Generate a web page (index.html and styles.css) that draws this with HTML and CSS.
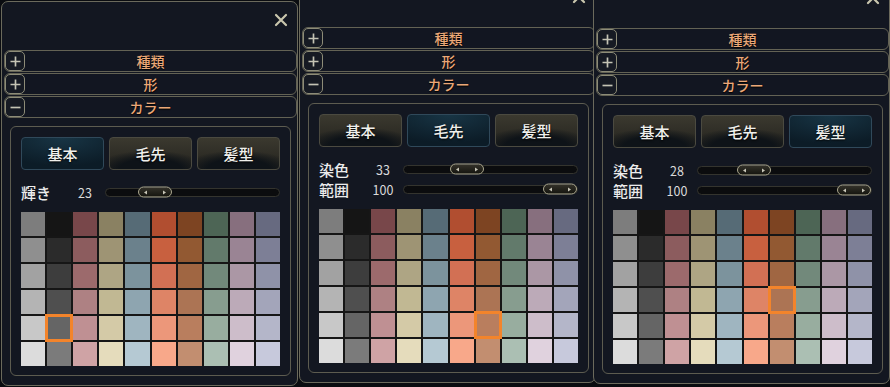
FILE: index.html
```html
<!DOCTYPE html>
<html lang="ja">
  <head>
    <meta charset="UTF-8" />
    <meta name="viewport" content="width=device-width, initial-scale=1.0" />
    <title>カラー</title>
    <link rel="stylesheet" href="styles.css">
  </head>
  <body>
    <div class="screen">
      <!-- 基本 -->
      <div class="panel">
        <div class="panel-top">
          <svg class="close-icon" viewBox="0 0 14 14"><path d="M2 2l10 10M12 2L2 12" /></svg>
        </div>
        <div class="section">
          <span class="toggle"><svg viewBox="0 0 18 18"><path d="M3 9h12M9 3v12" /></svg></span>
          <span class="section-title">種類</span>
        </div>
        <div class="section">
          <span class="toggle"><svg viewBox="0 0 18 18"><path d="M3 9h12M9 3v12" /></svg></span>
          <span class="section-title">形</span>
        </div>
        <div class="section">
          <span class="toggle"><svg viewBox="0 0 18 18"><path d="M3 9h12" /></svg></span>
          <span class="section-title">カラー</span>
        </div>
        <div class="color-box">
          <div class="tabs">
            <button class="tab active">基本</button>
            <button class="tab">毛先</button>
            <button class="tab">髪型</button>
          </div>
          <div class="slider-row">
            <span class="slider-label">輝き</span>
            <span class="slider-value">23</span>
            <div class="slider-track"><span class="slider-thumb" style="--v: 0.23"></span></div>
          </div>
          <div class="palette" data-row="4" data-col="1"></div>
        </div>
      </div>

      <!-- 毛先 -->
      <div class="panel panel-mid">
        <div class="panel-top">
          <svg class="close-icon" viewBox="0 0 14 14"><path d="M2 2l10 10M12 2L2 12" /></svg>
        </div>
        <div class="section">
          <span class="toggle"><svg viewBox="0 0 18 18"><path d="M3 9h12M9 3v12" /></svg></span>
          <span class="section-title">種類</span>
        </div>
        <div class="section">
          <span class="toggle"><svg viewBox="0 0 18 18"><path d="M3 9h12M9 3v12" /></svg></span>
          <span class="section-title">形</span>
        </div>
        <div class="section">
          <span class="toggle"><svg viewBox="0 0 18 18"><path d="M3 9h12" /></svg></span>
          <span class="section-title">カラー</span>
        </div>
        <div class="color-box">
          <div class="tabs">
            <button class="tab">基本</button>
            <button class="tab active">毛先</button>
            <button class="tab">髪型</button>
          </div>
          <div class="slider-row">
            <span class="slider-label">染色</span>
            <span class="slider-value">33</span>
            <div class="slider-track"><span class="slider-thumb" style="--v: 0.33"></span></div>
          </div>
          <div class="slider-row">
            <span class="slider-label">範囲</span>
            <span class="slider-value">100</span>
            <div class="slider-track"><span class="slider-thumb" style="--v: 1"></span></div>
          </div>
          <div class="palette" data-row="4" data-col="6"></div>
        </div>
      </div>

      <!-- 髪型 -->
      <div class="panel panel-last">
        <div class="panel-top">
          <svg class="close-icon" viewBox="0 0 14 14"><path d="M2 2l10 10M12 2L2 12" /></svg>
        </div>
        <div class="section">
          <span class="toggle"><svg viewBox="0 0 18 18"><path d="M3 9h12M9 3v12" /></svg></span>
          <span class="section-title">種類</span>
        </div>
        <div class="section">
          <span class="toggle"><svg viewBox="0 0 18 18"><path d="M3 9h12M9 3v12" /></svg></span>
          <span class="section-title">形</span>
        </div>
        <div class="section">
          <span class="toggle"><svg viewBox="0 0 18 18"><path d="M3 9h12" /></svg></span>
          <span class="section-title">カラー</span>
        </div>
        <div class="color-box">
          <div class="tabs">
            <button class="tab">基本</button>
            <button class="tab">毛先</button>
            <button class="tab active">髪型</button>
          </div>
          <div class="slider-row">
            <span class="slider-label">染色</span>
            <span class="slider-value">28</span>
            <div class="slider-track"><span class="slider-thumb" style="--v: 0.28"></span></div>
          </div>
          <div class="slider-row">
            <span class="slider-label">範囲</span>
            <span class="slider-value">100</span>
            <div class="slider-track"><span class="slider-thumb" style="--v: 1"></span></div>
          </div>
          <div class="palette" data-row="3" data-col="6"></div>
        </div>
      </div>
    </div>

    <script>
      // Cores da paleta, uma coluna por tom (de escuro para claro)
      const columns = [
        ["#7d7d7d", "#8f8f8f", "#a2a2a2", "#b4b4b4", "#c8c8c8", "#dcdcdc"],
        ["#151515", "#2b2b2b", "#3d3d3d", "#4f4f4f", "#656565", "#7b7b7b"],
        ["#78474a", "#8c5c5e", "#9c6a6c", "#ae8183", "#bf9093", "#cfa3a5"],
        ["#8a8162", "#9e9474", "#aea584", "#c1b893", "#d4caa7", "#e5dcbc"],
        ["#566b76", "#6b818c", "#7c939d", "#8ea5b0", "#9fb5c0", "#b5c9d3"],
        ["#b14e30", "#c8603f", "#d27054", "#de8466", "#ec977a", "#f8a88a"],
        ["#7d4422", "#925932", "#a06642", "#ac7454", "#b97e5e", "#c28e70"],
        ["#4d6555", "#627a6b", "#72897b", "#879d8f", "#98ad9f", "#abbfb3"],
        ["#876f7e", "#9a8494", "#ab97a5", "#bcaab8", "#cdbdca", "#e0d2de"],
        ["#676a80", "#7d7f96", "#8f92a8", "#a3a5ba", "#b4b6c9", "#c7c9dc"]
      ];

      document.querySelectorAll(".palette").forEach(palette => {
        const selRow = Number(palette.dataset.row);
        const selCol = Number(palette.dataset.col);
        for (let row = 0; row < 6; row++) {
          for (let col = 0; col < 10; col++) {
            const cell = document.createElement("span");
            cell.className = "swatch";
            cell.style.background = columns[col][row];
            if (row === selRow && col === selCol) cell.classList.add("selected");
            palette.appendChild(cell);
          }
        }
      });
    </script>
  </body>
</html>
```

FILE: styles.css
```css
* {
  box-sizing: border-box;
}

body {
  margin: 0;
  background-color: #0a0c10;
  font-family: "Noto Sans CJK JP", "Noto Sans", sans-serif;
  overflow: hidden;
}

.screen {
  display: flex;
  align-items: flex-start;
  width: 890px;
  height: 387px;
  overflow: hidden;
}

.panel {
  flex: none;
  width: 297px;
  margin-top: 1px;
  margin-left: 1px;
  padding: 0 0 9px 2px;
  background-color: #131721;
  border: 1px solid #6b6a5c;
  border-radius: 7px;
}

.panel-mid {
  margin-top: -22px;
}

.panel-last {
  margin-top: -21px;
  margin-left: -3px;
}

.panel-top {
  height: 48px;
  display: flex;
  justify-content: flex-end;
  align-items: flex-start;
  padding: 11px 9px 0 0;
}

.close-icon {
  width: 14px;
  height: 14px;
  fill: none;
  stroke: #c9c6ad;
  stroke-width: 2.2;
  stroke-linecap: round;
}

.section {
  display: grid;
  grid-template-columns: 20px 1fr 20px;
  align-items: center;
  height: 22px;
  margin-bottom: 1px;
  border: 1px solid #636254;
  border-radius: 6px;
  background-color: #121621;
}

.toggle {
  width: 20px;
  height: 20px;
  display: flex;
  align-items: center;
  justify-content: center;
  border: 1px solid #8d8c78;
  border-radius: 5px;
  background-color: #161a23;
}

.toggle svg {
  width: 15px;
  height: 15px;
  fill: none;
  stroke: #c4c3b4;
  stroke-width: 2;
}

.section-title {
  text-align: center;
  font-size: 14px;
  font-weight: 500;
  line-height: 20px;
  color: #eba878;
  text-shadow: 0 1px 1px #000;
}

.color-box {
  margin: 8px 6px 0;
  padding: 10px 10px 9px;
  border: 1px solid #5d5c50;
  border-radius: 6px;
}

.tabs {
  display: grid;
  grid-template-columns: repeat(3, 1fr);
  gap: 5px;
  margin-bottom: 12px;
}

.tab {
  height: 33px;
  padding: 0;
  border: 1px solid #4b4a40;
  border-radius: 4px;
  font-family: inherit;
  font-size: 15px;
  font-weight: 500;
  color: #f0f0ec;
  text-shadow: 0 1px 2px #000;
  background:
    radial-gradient(ellipse 70% 60% at 50% 100%, #0e1318 55%, rgba(14, 19, 24, 0) 100%),
    linear-gradient(#3b392f, #24231e);
}

.tab.active {
  border-color: #30495a;
  background: radial-gradient(ellipse 90% 90% at 50% 0%, #183545 0%, #0c1c27 100%);
}

.slider-row {
  display: flex;
  align-items: center;
  height: 20px;
}

.slider-label {
  width: 49px;
  font-size: 15px;
  font-weight: 500;
  color: #ececec;
}

.slider-value {
  width: 30px;
  text-align: center;
  font-size: 12.5px;
  color: #dadada;
}

.slider-track {
  flex: 1;
  position: relative;
  height: 9px;
  margin-left: 5px;
  border: 1px solid #34342e;
  border-radius: 5px;
  background-color: #0b0c0e;
}

.slider-thumb {
  position: absolute;
  top: 50%;
  left: calc((100% - 34px) * var(--v));
  width: 34px;
  height: 11px;
  transform: translateY(-50%);
  display: flex;
  align-items: center;
  justify-content: space-between;
  padding: 0 5px;
  border: 1px solid #aca88f;
  border-radius: 6px;
  background: linear-gradient(#34322a, #15150f);
}

.slider-thumb::before,
.slider-thumb::after {
  content: "";
  border-top: 2.5px solid transparent;
  border-bottom: 2.5px solid transparent;
}

.slider-thumb::before {
  border-right: 3px solid #c8c6b8;
}

.slider-thumb::after {
  border-left: 3px solid #c8c6b8;
}

.palette {
  display: grid;
  grid-template-columns: repeat(10, 1fr);
  grid-auto-rows: 24px;
  gap: 2px;
  margin-top: 10px;
  background-color: #161616;
}

.swatch {
  display: block;
}

.swatch.selected {
  position: relative;
  z-index: 1;
  outline: 3px solid #f3842b;
  outline-offset: -1px;
}
```
